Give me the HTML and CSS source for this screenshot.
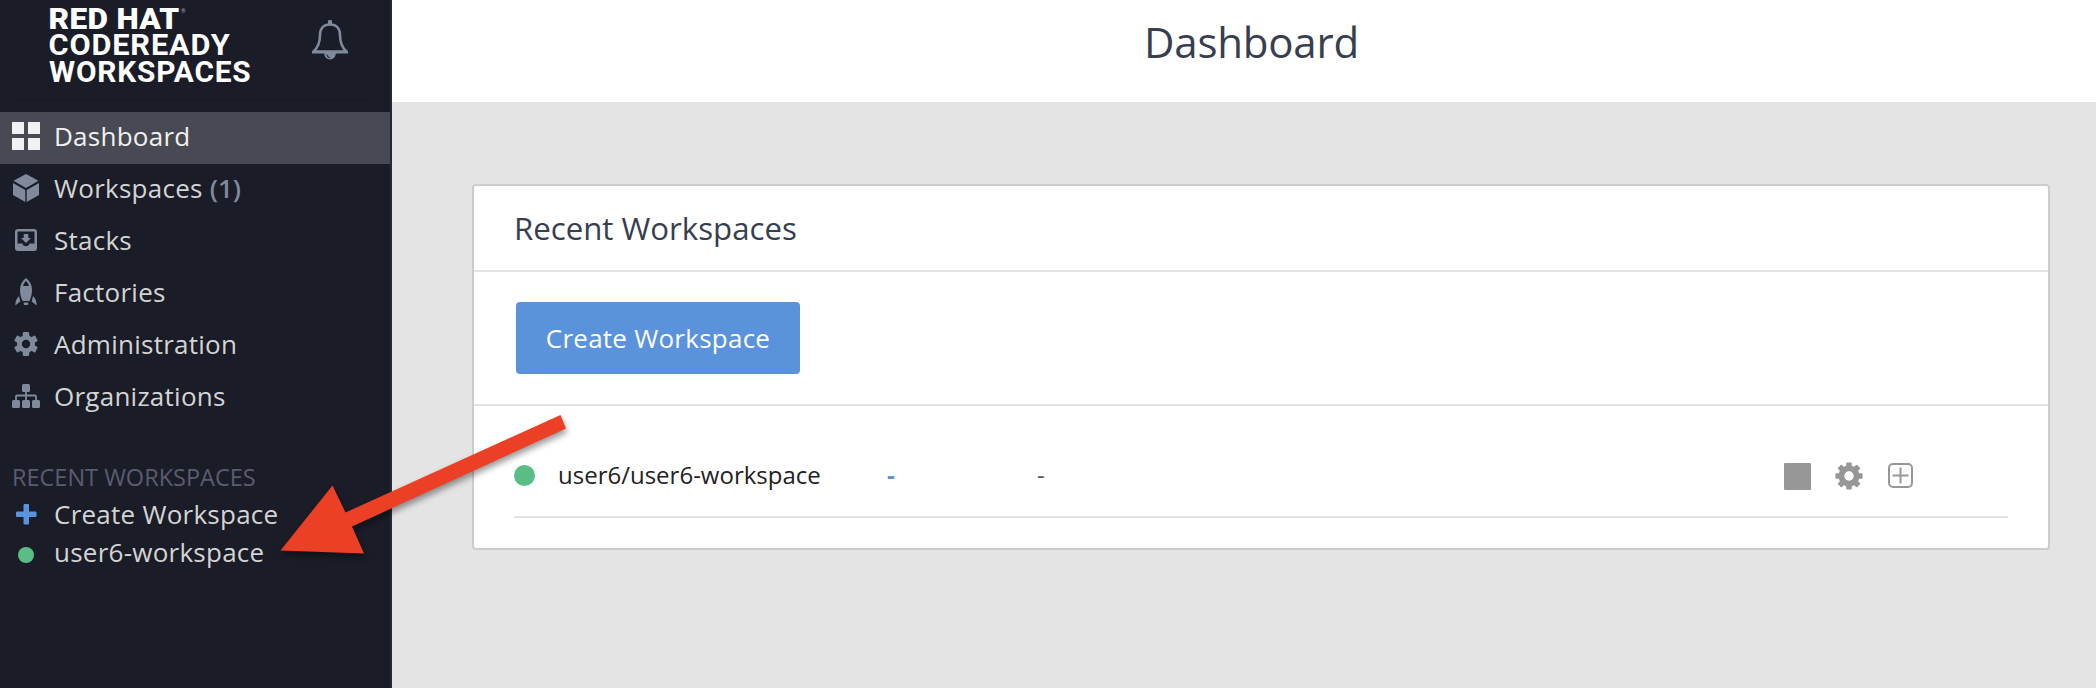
FILE: index.html
```html
<!DOCTYPE html>
<html lang="en">
<head>
<meta charset="utf-8">
<title>Dashboard</title>
<link rel="stylesheet" href="styles.css">
</head>
<body>
<div class="app">
  <aside class="sidebar">
    <div class="brand">
      <svg class="logo" width="206" height="96" viewBox="0 0 206 96">
        <text x="-.5" y="29" textLength="131" lengthAdjust="spacingAndGlyphs" class="logo-heavy">RED HAT</text>
        <text x="132" y="13" class="logo-mark">®</text>
        <text x="-.5" y="55.300" textLength="182" lengthAdjust="spacingAndGlyphs">CODEREADY</text>
        <text x="0" y="81.700" textLength="202.500" lengthAdjust="spacingAndGlyphs">WORKSPACES</text>
      </svg>
      <svg class="bell" width="38" height="42" viewBox="0 0 38 42">
        <path d="M19 4.500C12 4.500 9 9 9 15c0 8-2 12.500-6.500 16.500h33C31 27.500 29 23 29 15c0-6-3-10.500-10-10.500z" fill="none" stroke="#808a9c" stroke-width="2.600" stroke-linejoin="round"/>
        <path d="M1 31.200h36v2.300H1zM17 1.500a2 2 0 0 1 4 0v3h-4zM13.200 33.500h11.600a5.800 6 0 0 1-11.600 0z" fill="#808a9c"/>
        <path d="M15.800 34.500a3.500 3.500 0 0 0 3.200 3.200" fill="none" stroke="#1a1c27" stroke-width="1"/>
      </svg>
    </div>
    <nav class="nav">
      <a class="item active"><svg width="28" height="28" viewBox="0 0 28 28"><path d="M0 0h12v12H0zM16 0h12v12H16zM0 16h12v12H0zM16 16h12v12H16z"/></svg><span>Dashboard</span></a>
      <a class="item"><svg width="28" height="28" viewBox="0 0 28 28"><path d="M14 0l12.500 6.800L14 14 1.500 6.800zM1 9l12.300 7v12L1 21zM27 9v12l-12.300 7V16z"/></svg><span>Workspaces <b>(1)</b></span></a>
      <a class="item"><svg width="28" height="28" viewBox="0 0 28 28"><path fill-rule="evenodd" d="M6 3h16a3 3 0 0 1 3 3v16a3 3 0 0 1-3 3H6a3 3 0 0 1-3-3V6a3 3 0 0 1 3-3zM5.500 5.500v12h5a3.600 3.600 0 0 0 7 0h5v-12z"/><path d="M11.700 8h4.600v4h2.700l-5 5-5-5h2.700z"/></svg><span>Stacks</span></a>
      <a class="item"><svg width="28" height="28" viewBox="0 0 28 28"><path fill-rule="evenodd" d="M14 0c4 3 6 7 6 12 0 4-1 8-2.500 11h-7C9 20 8 16 8 12c0-5 2-9 6-12zM14 3c-1.700 1.500-2.500 3-2.800 5h5.600c-.3-2-1.100-3.500-2.800-5z"/><path d="M7 18l1.300 5.500L3.300 27.500c0-4 1-7 3.700-9.500zM21 18l-1.300 5.500 5 4c0-4-1-7-3.700-9.500zM11.500 24.500h5l-.5 2.500h-4z"/></svg><span>Factories</span></a>
      <a class="item"><svg width="28" height="28" viewBox="-14 -14 28 28"><g><rect id="tooth" x="-3.200" y="-12" width="6.400" height="24" rx="1"/><use href="#tooth" transform="rotate(60)"/><use href="#tooth" transform="rotate(120)"/><path fill-rule="evenodd" d="M-9 0a9 9 0 1 0 18 0a9 9 0 1 0-18 0z"/></g><circle r="4.200" fill="#1a1c27"/></svg><span>Administration</span></a>
      <a class="item"><svg width="28" height="28" viewBox="0 0 28 28"><rect x="10" y="2" width="8" height="8" rx="1.500"/><rect y="18" width="8" height="8" rx="1.500"/><rect x="10" y="18" width="8" height="8" rx="1.500"/><rect x="20" y="18" width="8" height="8" rx="1.500"/><path d="M4 19v-4.500q0-1 1-1h18q1 0 1 1V19M14 9v10" fill="none" stroke="#808a9c" stroke-width="1.800"/></svg><span>Organizations</span></a>
    </nav>
    <h2 class="recent-title">RECENT WORKSPACES</h2>
    <div class="recent">
      <a class="recent-item"><svg width="28" height="28" viewBox="0 0 28 28"><path d="M12 4.500h4.500v7.500H24v4.500h-7.500V24H12v-7.500H4.500V12H12z" fill="#5a92dc" stroke="#5a92dc" stroke-linejoin="round"/></svg><span>Create Workspace</span></a>
      <a class="recent-item"><i class="dot"></i><span>user6-workspace</span></a>
    </div>
  </aside>
  <main class="main">
    <header class="topbar"><h1>Dashboard</h1></header>
    <section class="card">
      <h3 class="card-title">Recent Workspaces</h3>
      <div class="toolbar"><button class="create">Create Workspace</button></div>
      <div class="list">
        <div class="row">
          <i class="status"></i><span class="name">user6/user6-workspace</span><span class="mem">-</span><span class="stack">-</span>
          <div class="actions">
            <svg width="27" height="27" viewBox="0 0 27 27"><rect width="27" height="27" rx="1" fill="#979797"/></svg>
            <svg width="28" height="28" viewBox="-14 -14 28 28" fill="#979797"><g id="teeth"><rect x="-2.800" y="-13.600" width="5.600" height="27.200" rx="1"/><rect x="-13.600" y="-2.800" width="27.200" height="5.600" rx="1"/></g><use href="#teeth" transform="rotate(45)"/><circle r="10.500"/><circle r="4.700" fill="#fff"/></svg>
            <svg class="add" width="25" height="25" viewBox="0 0 25 25"><rect x="1" y="1" width="23" height="23" rx="4" fill="none" stroke="#979797" stroke-width="2"/><path d="M4.500 12.500h16M12.500 4.500v16" stroke="#979797" stroke-width="2"/></svg>
          </div>
        </div>
      </div>
    </section>
  </main>
</div>
<svg class="arrow" width="310" height="160" viewBox="270 405 310 160"><path d="M280.500 550.500L332.500 485.500 345.500 512.500 560.500 415 566 428.500 352 526.500 364 553.500z" fill="#ec4026"/></svg>
</body>
</html>
```
FILE: styles.css
```css
* { box-sizing: border-box; }
body { margin: 0; font-family: "Open Sans", sans-serif; overflow: hidden; }
h1, h2, h3 { margin: 0; font-weight: 400; }
svg { display: block; flex: none; }
.app { display: flex; height: 688px; }
.sidebar { flex: none; width: 392px; background: #1a1c27; border-right: 2px solid #242a3a; }
.brand { display: flex; height: 101px; margin: 0 20px 11px 12px; border-bottom: 1px solid #161822; }
.logo { margin-left: 37px; fill: #fff; font: 700 28.8px Roboto, sans-serif; letter-spacing: .8px; }
.logo-heavy { font-weight: 900; letter-spacing: .3px; }
.logo-mark { font-size: 6px; fill: #a8a9ae; letter-spacing: 0; }
.bell { margin: 20px 0 0 56px; }
.item, .recent-item { display: flex; align-items: center; gap: 14px; padding-left: 12px; color: #d4d4d4; font-size: 26px; letter-spacing: .25px; }
.item { height: 52px; line-height: 52px; fill: #808a9c; }
.item span { margin-top: -4px; }
.item svg { margin-top: -4px; }
.item b { color: #808a9c; font-weight: 600; letter-spacing: 0; }
.active { background: #474a53; color: #f1f1f1; fill: #f1f1f1; }
.recent-title { margin: 33px 0 0 12px; color: #5a5d70; font-size: 23.5px; line-height: 40px; }
.recent { margin-top: -2px; }
.recent-item { height: 38px; line-height: 38px; }
.dot { width: 16px; height: 16px; margin: 6px 6px 0; border-radius: 50%; background: #58be86; }
.main { flex: 1; background: #e4e4e4; }
.topbar { height: 102px; background: #fff; color: #373e50; }
.topbar h1 { padding-left: 752px; font-size: 42px; line-height: 84px; letter-spacing: -.2px; }
.card { width: 1578px; height: 366px; margin: 82px 0 0 80px; background: #fff; border: 2px solid #ccc; border-radius: 4px; }
.card-title { height: 86px; padding-left: 40px; border-bottom: 2px solid #e3e3e3; color: #373e50; font-size: 31.2px; line-height: 84px; }
.toolbar { height: 134px; padding: 30px 42px; border-bottom: 2px solid #e3e3e3; }
.create { width: 284px; height: 72px; padding: 0; border: 0; border-radius: 4px; background: #5a92dc; color: #fff; font: 26px "Open Sans", sans-serif; letter-spacing: .25px; }
.list { padding: 28px 40px 0; }
.row { display: flex; align-items: center; height: 84px; border-bottom: 2px solid #e3e3e3; color: #222; font-size: 24px; }
.status { width: 21px; height: 21px; border-radius: 50%; background: #58be86; }
.row > span { margin-top: -2px; }
.name { width: 329px; margin-left: 23px; }
.mem { width: 150px; color: #5a92dc; font-weight: 700; }
.stack { color: #555; }
.actions { display: flex; gap: 24px; margin: 2px 95px 0 auto; align-items: center; }
.add { margin: -2px 0 0 1px; }
.arrow { position: absolute; left: 270px; top: 405px; filter: drop-shadow(1px 4px 3px rgba(0, 0, 0, .4)); }
```
